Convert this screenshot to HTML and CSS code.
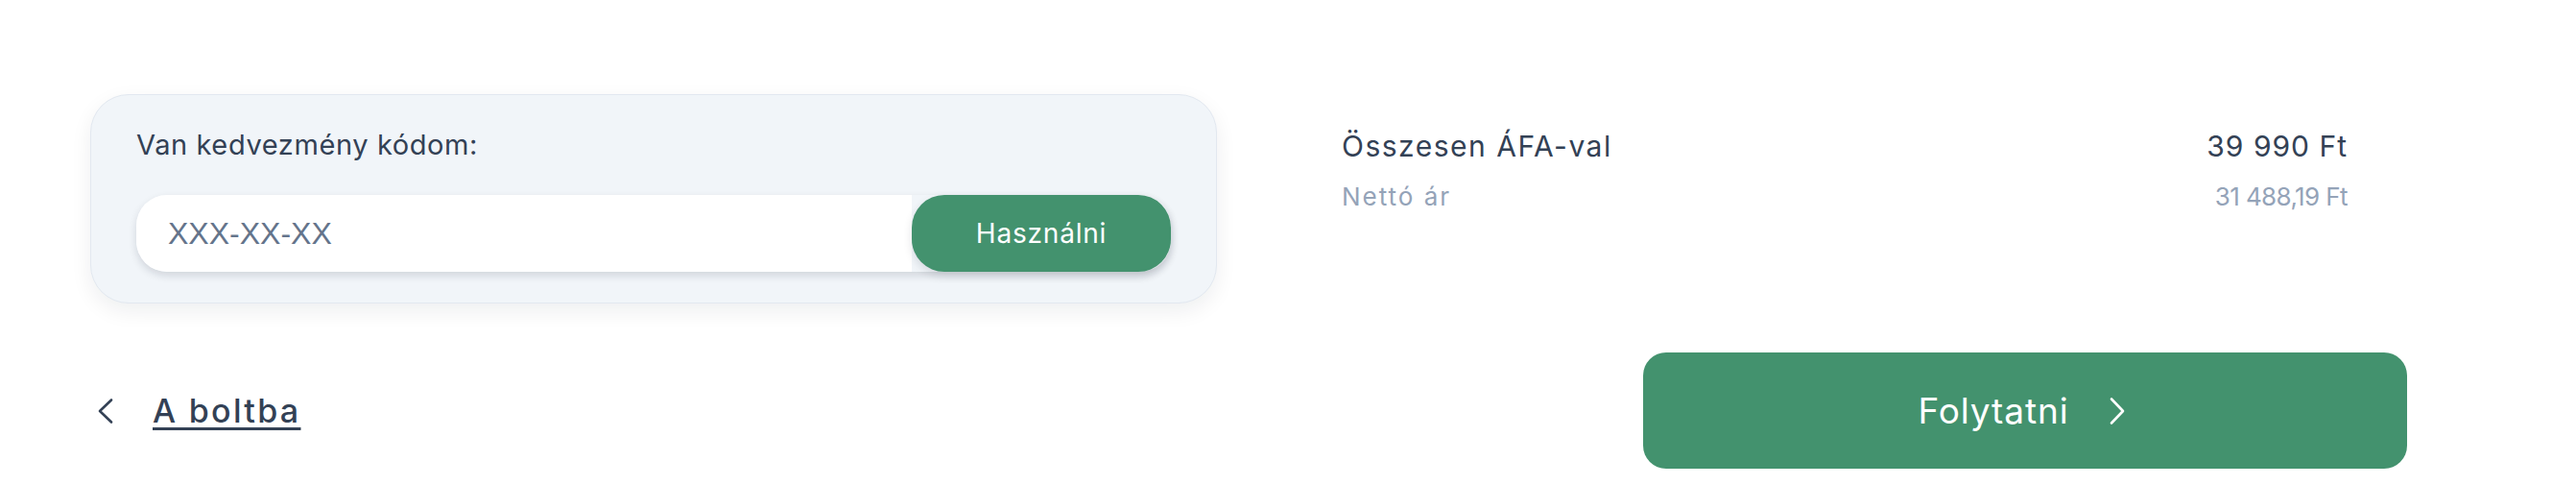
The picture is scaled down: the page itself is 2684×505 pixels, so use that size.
FILE: index.html
```html
<!DOCTYPE html>
<html lang="hu">
<head>
    <meta charset="UTF-8">
    <meta name="viewport" content="width=device-width, initial-scale=1.0">
    <title>Kosár</title>
    <link rel="stylesheet" href="styles.css">
</head>
<body>

    <section class="checkout">

        <div class="top-row">

            <div class="coupon-card">
                <label class="coupon-label" for="couponInput">Van kedvezmény kódom:</label>
                <div class="coupon-group">
                    <input id="couponInput" class="coupon-input" type="text" placeholder="XXX-XX-XX">
                    <button class="coupon-btn">Használni</button>
                </div>
            </div>

            <div class="totals">
                <div class="total-row">
                    <span class="total-name">Összesen ÁFA-val</span>
                    <span class="total-value">39 990 Ft</span>
                </div>
                <div class="total-row net">
                    <span class="total-name">Nettó ár</span>
                    <span class="total-value">31 488,19 Ft</span>
                </div>
            </div>

        </div>

        <div class="bottom-row">

            <a class="back-link" href="#">
                <svg class="back-icon" viewBox="0 0 32 32" width="32" height="32">
                    <path d="M22 4.5 L10 16 L22 27.5" />
                </svg>
                <span>A boltba</span>
            </a>

            <button class="continue-btn">
                <span>Folytatni</span>
                <svg class="next-icon" viewBox="0 0 32 32" width="32" height="32">
                    <path d="M10 3.5 L22 16 L10 28.5" />
                </svg>
            </button>

        </div>

    </section>

</body>
</html>
```

FILE: styles.css
```css
* {
    box-sizing: border-box;
}

body {
    margin: 0;
    background: #ffffff;
    font-family: Inter, "Open Sans", sans-serif;
    color: #334155;
}

.checkout {
    padding: 98px 176px 0 94px;
}

.top-row {
    display: flex;
    gap: 130px;
}

.coupon-card {
    width: 1174px;
    padding: 32px 47px;
    background: #f1f5f9;
    border: 1px solid #e2e8f0;
    border-radius: 40px;
    box-shadow: 0 8px 22px rgba(15, 23, 42, 0.07);
}

.coupon-label {
    display: block;
    font-size: 29px;
    letter-spacing: 0.6px;
    line-height: 40px;
    color: #334155;
}

.coupon-group {
    display: flex;
    margin-top: 32px;
    height: 80px;
    border-radius: 32px;
    box-shadow: 0 4px 8px rgba(15, 23, 42, 0.14);
}

.coupon-input {
    flex: 1;
    min-width: 0;
    border: none;
    outline: none;
    background: #ffffff;
    border-radius: 32px 0 0 32px;
    padding: 0 33px;
    font-family: "Liberation Sans", Arial, sans-serif;
    font-size: 32px;
    color: #334155;
}

.coupon-input::placeholder {
    color: #64748b;
}

.coupon-btn {
    width: 270px;
    border: none;
    border-radius: 34px;
    background: #43926e;
    color: #ffffff;
    font-family: Inter, "Open Sans", sans-serif;
    font-size: 28px;
    letter-spacing: 0.8px;
    box-shadow: 0 4px 10px rgba(15, 23, 42, 0.12);
    cursor: pointer;
}

.totals {
    width: 1048px;
    padding-top: 34px;
}

.total-row {
    display: flex;
    justify-content: space-between;
    font-size: 30px;
    line-height: 40px;
    color: #334155;
}

.total-row .total-name {
    letter-spacing: 1.5px;
}

.total-row .total-value {
    letter-spacing: 1px;
}

.total-row.net {
    margin-top: 15px;
    font-size: 26px;
    line-height: 36px;
    color: #94a3b8;
}

.total-row.net .total-name {
    letter-spacing: 2px;
}

.total-row.net .total-value {
    letter-spacing: -0.6px;
}

.bottom-row {
    display: flex;
    justify-content: space-between;
    align-items: center;
    margin-top: 51px;
}

.back-link {
    display: flex;
    align-items: center;
    gap: 33px;
    color: #334155;
    font-size: 34px;
    font-weight: 500;
    letter-spacing: 2.3px;
    text-decoration: underline;
    text-decoration-thickness: 3px;
    text-underline-offset: 5px;
}

.back-icon path,
.next-icon path {
    fill: none;
    stroke-width: 2.6;
    stroke-linecap: round;
    stroke-linejoin: round;
}

.back-icon path {
    stroke: #334155;
}

.next-icon path {
    stroke: #ffffff;
}

.continue-btn {
    width: 796px;
    height: 121px;
    display: flex;
    align-items: center;
    justify-content: center;
    gap: 34px;
    border: none;
    border-radius: 24px;
    background: #43926e;
    color: #ffffff;
    font-family: Inter, "Open Sans", sans-serif;
    font-size: 37px;
    letter-spacing: 0.9px;
    cursor: pointer;
}
```
